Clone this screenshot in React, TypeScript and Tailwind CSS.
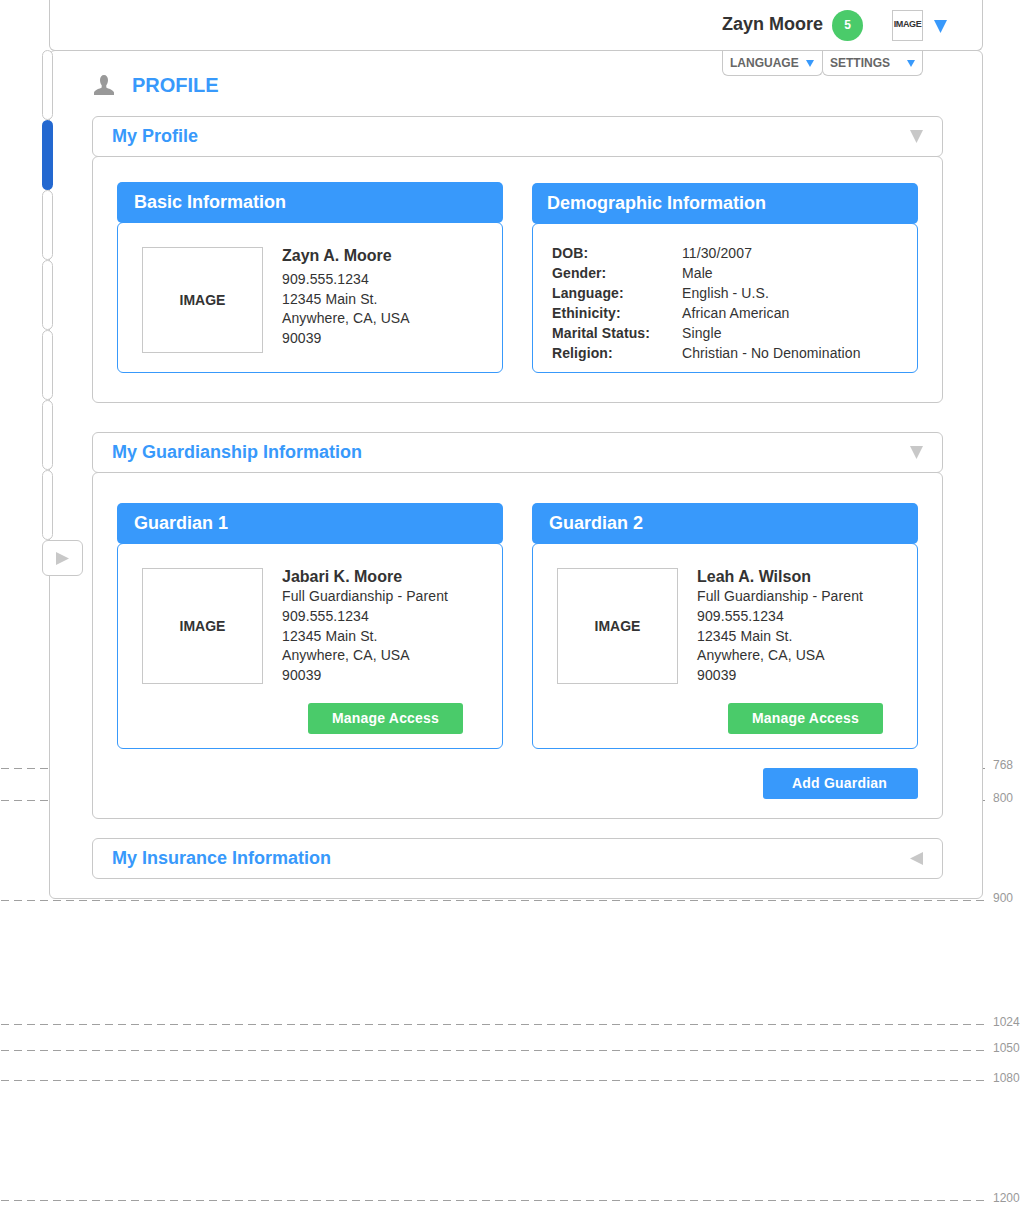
const RULES = [
  { y: 768, width: "w-[48px]", label: "768", tick: true, labelTop: 757 },
  { y: 800, width: "w-[48px]", label: "800", tick: true, labelTop: 790 },
  { y: 900, width: "w-[984px]", label: "900", tick: false, labelTop: 890 },
  { y: 1024, width: "w-[984px]", label: "1024", tick: false, labelTop: 1014 },
  { y: 1050, width: "w-[984px]", label: "1050", tick: false, labelTop: 1040 },
  { y: 1080, width: "w-[984px]", label: "1080", tick: false, labelTop: 1070 },
  { y: 1200, width: "w-[984px]", label: "1200", tick: false, labelTop: 1190 },
];

const DEMOGRAPHICS = [
  ["DOB:", "11/30/2007"],
  ["Gender:", "Male"],
  ["Language:", "English - U.S."],
  ["Ethinicity:", "African American"],
  ["Marital Status:", "Single"],
  ["Religion:", "Christian - No Denomination"],
];

function Triangle({ dir, className }: { dir: "down" | "left" | "right"; className: string }) {
  const points = dir === "down" ? "0,0 12,0 6,12" : dir === "left" ? "12,0 12,12 0,6" : "0,0 0,12 12,6";
  return (
    <svg viewBox="0 0 12 12" className={className} preserveAspectRatio="none">
      <polygon points={points} fill="currentColor" />
    </svg>
  );
}

function SectionHeader({ title, dir = "down" }: { title: string; dir?: "down" | "left" }) {
  return (
    <div className="flex h-[41px] items-center justify-between rounded-[6px] border border-[#c8c8c8] bg-white pl-[19px] pr-[19px]">
      <span className="text-[18px] font-bold text-[#3899fb]">{title}</span>
      <Triangle dir={dir} className="h-[13px] w-[13px] text-[#c8c8c8]" />
    </div>
  );
}

function Card({
  title,
  bodyHeight,
  titlePad = "pl-[17px]",
  children,
}: {
  title: string;
  bodyHeight: string;
  titlePad?: string;
  children: React.ReactNode;
}) {
  return (
    <div className="w-[386px]">
      <div className={`flex h-[41px] items-center rounded-[5px] bg-[#3899fb] text-[18px] font-bold text-white ${titlePad}`}>
        {title}
      </div>
      <div className={`-mt-px rounded-[6px] border border-[#3899fb] bg-white ${bodyHeight}`}>{children}</div>
    </div>
  );
}

function ImageBox({ height }: { height: string }) {
  return (
    <div className={`flex w-[121px] shrink-0 items-center justify-center border border-[#c8c8c8] text-[14px] font-bold text-[#333] ${height}`}>
      IMAGE
    </div>
  );
}

function GuardianCard({ title, name, buttonPad }: { title: string; name: string; buttonPad: string }) {
  return (
    <Card title={title} bodyHeight="h-[206px]">
      <div className="flex h-[140px] pl-[24px] pt-[24px]">
        <ImageBox height="h-[116px]" />
        <div className="-mt-px ml-[19px] text-[14px] leading-[19.8px] tracking-[0.1px] text-[#333]">
          <div className="text-[16px] font-bold leading-[20px] tracking-normal">{name}</div>
          <div>Full Guardianship - Parent</div>
          <div>909.555.1234</div>
          <div>12345 Main St.</div>
          <div>Anywhere, CA, USA</div>
          <div>90039</div>
        </div>
      </div>
      <div className={`mt-[19px] flex justify-end ${buttonPad}`}>
        <button className="h-[31px] w-[155px] rounded-[3px] bg-[#4acb6a] text-[14px] font-bold tracking-[0.2px] text-white">
          Manage Access
        </button>
      </div>
    </Card>
  );
}

function Dropdown({ label, width, gap }: { label: string; width: string; gap: string }) {
  return (
    <div className={`flex h-[25px] items-center rounded-b-[6px] border border-t-0 border-[#c8c8c8] bg-white pl-[7px] text-[12px] font-bold text-[#666] ${width}`}>
      <span>{label}</span>
      <Triangle dir="down" className={`h-[7px] w-[8px] text-[#3899fb] ${gap}`} />
    </div>
  );
}

export default function App() {
  return (
    <div className="relative h-[1213px] w-[1032px] overflow-hidden bg-white font-['Liberation_Sans',Arial,sans-serif]">
      {/* Screen height guides */}
      {RULES.map((rule) => (
        <div key={rule.label}>
          <div
            className={`absolute left-px h-px bg-[repeating-linear-gradient(90deg,#a0a0a0_0px,#a0a0a0_8px,transparent_8px,transparent_13px)] ${rule.width}`}
            style={{ top: rule.y }}
          />
          {rule.tick && <div className="absolute left-[983px] h-px w-[2px] bg-[#999]" style={{ top: rule.y }} />}
          <div className="absolute left-[993px] text-[12px] leading-[16px] text-[#999]" style={{ top: rule.labelTop }}>
            {rule.label}
          </div>
        </div>
      ))}

      <div className="relative ml-[49px] w-[934px]">
        {/* Top bar */}
        <div className="flex h-[51px] items-center justify-end rounded-b-[6px] border border-t-0 border-[#c8c8c8] bg-white pr-[35px]">
          <span className="-mt-[2px] text-[18px] font-bold text-[#333]">Zayn Moore</span>
          <div className="ml-[9px] flex h-[31px] w-[31px] items-center justify-center rounded-full bg-[#4acb6a] text-[12px] font-bold text-white">
            5
          </div>
          <div className="ml-[29px] flex h-[31px] w-[31px] items-center justify-center border border-[#c8c8c8] text-[9px] font-bold tracking-[-0.4px] text-[#333]">
            IMAGE
          </div>
          <Triangle dir="down" className="ml-[11px] mt-[3px] h-[13px] w-[13px] text-[#3899fb]" />
        </div>

        {/* Main panel */}
        <div className="relative -mt-px h-[849px] rounded-[6px] border border-[#c8c8c8] bg-white pl-[42px] pr-[39px]">
          <div className="absolute right-[59px] top-0 flex">
            <Dropdown label="LANGUAGE" width="w-[101px]" gap="ml-[7px]" />
            <Dropdown label="SETTINGS" width="w-[101px] -ml-px" gap="ml-[17px]" />
          </div>

          <div className="flex h-[65px] items-center pt-[3px]">
            <svg viewBox="0 0 20 20" className="ml-[2px] h-[20px] w-[20px] text-[#999]">
              <path
                d="M10 0C7.600 0 6 2 6 5c0 2.200.7 4 1.700 5.200v2.300C6 13.800.8 14.500 0 17.500V20h20v-2.500c-.8-3-6-3.700-7.700-5v-2.300C13.300 9 14 7.200 14 5c0-3-1.600-5-4-5z"
                fill="currentColor"
              />
            </svg>
            <h1 className="ml-[18px] text-[20px] font-bold text-[#3899fb]">PROFILE</h1>
          </div>

          <SectionHeader title="My Profile" />
          <div className="-mt-px flex h-[247px] items-start justify-between rounded-[6px] border border-[#c8c8c8] bg-white px-[24px] pt-[25px]">
            <Card title="Basic Information" bodyHeight="h-[151px]">
              <div className="flex pl-[24px] pt-[24px]">
                <ImageBox height="h-[106px]" />
                <div className="-mt-px ml-[19px] text-[14px] leading-[19.6px] tracking-[0.1px] text-[#333]">
                  <div className="mb-[4px] text-[16px] font-bold leading-[20px] tracking-normal">Zayn A. Moore</div>
                  <div>909.555.1234</div>
                  <div>12345 Main St.</div>
                  <div>Anywhere, CA, USA</div>
                  <div>90039</div>
                </div>
              </div>
            </Card>
            <div className="mt-px">
              <Card title="Demographic Information" titlePad="pl-[15px]" bodyHeight="h-[150px]">
                <div className="pl-[19px] pt-[19px] text-[14px] leading-[20px] tracking-[0.1px] text-[#333]">
                  {DEMOGRAPHICS.map(([label, value]) => (
                    <div key={label} className="flex">
                      <span className="w-[130px] font-bold">{label}</span>
                      <span>{value}</span>
                    </div>
                  ))}
                </div>
              </Card>
            </div>
          </div>

          <div className="mt-[29px]">
            <SectionHeader title="My Guardianship Information" />
          </div>
          <div className="-mt-px h-[347px] rounded-[6px] border border-[#c8c8c8] bg-white px-[24px] pt-[30px]">
            <div className="flex justify-between">
              <GuardianCard title="Guardian 1" name="Jabari K. Moore" buttonPad="pr-[39px]" />
              <GuardianCard title="Guardian 2" name="Leah A. Wilson" buttonPad="pr-[34px]" />
            </div>
            <div className="mt-[19px] flex justify-end">
              <button className="h-[31px] w-[155px] rounded-[3px] bg-[#3899fb] pr-[2px] text-[14px] font-bold tracking-[0.2px] text-white">
                Add Guardian
              </button>
            </div>
          </div>

          <div className="mt-[19px]">
            <SectionHeader title="My Insurance Information" dir="left" />
          </div>
        </div>

        {/* Side rail */}
        <div className="absolute -left-[7px] top-[50px] flex w-[11px] flex-col">
          <div className="h-[70px] rounded-[6px] border border-[#c8c8c8] bg-white" />
          <div className="h-[70px] rounded-[6px] bg-[#2368d0]" />
          <div className="h-[70px] rounded-[6px] border border-[#c8c8c8] bg-white" />
          <div className="h-[70px] rounded-[6px] border border-[#c8c8c8] bg-white" />
          <div className="h-[70px] rounded-[6px] border border-[#c8c8c8] bg-white" />
          <div className="h-[70px] rounded-[6px] border border-[#c8c8c8] bg-white" />
          <div className="h-[70px] rounded-[6px] border border-[#c8c8c8] bg-white" />
          <div className="flex h-[36px] w-[41px] items-center justify-center rounded-[6px] border border-[#c8c8c8] bg-white">
            <Triangle dir="right" className="h-[13px] w-[13px] text-[#c8c8c8]" />
          </div>
        </div>
      </div>
    </div>
  );
}
